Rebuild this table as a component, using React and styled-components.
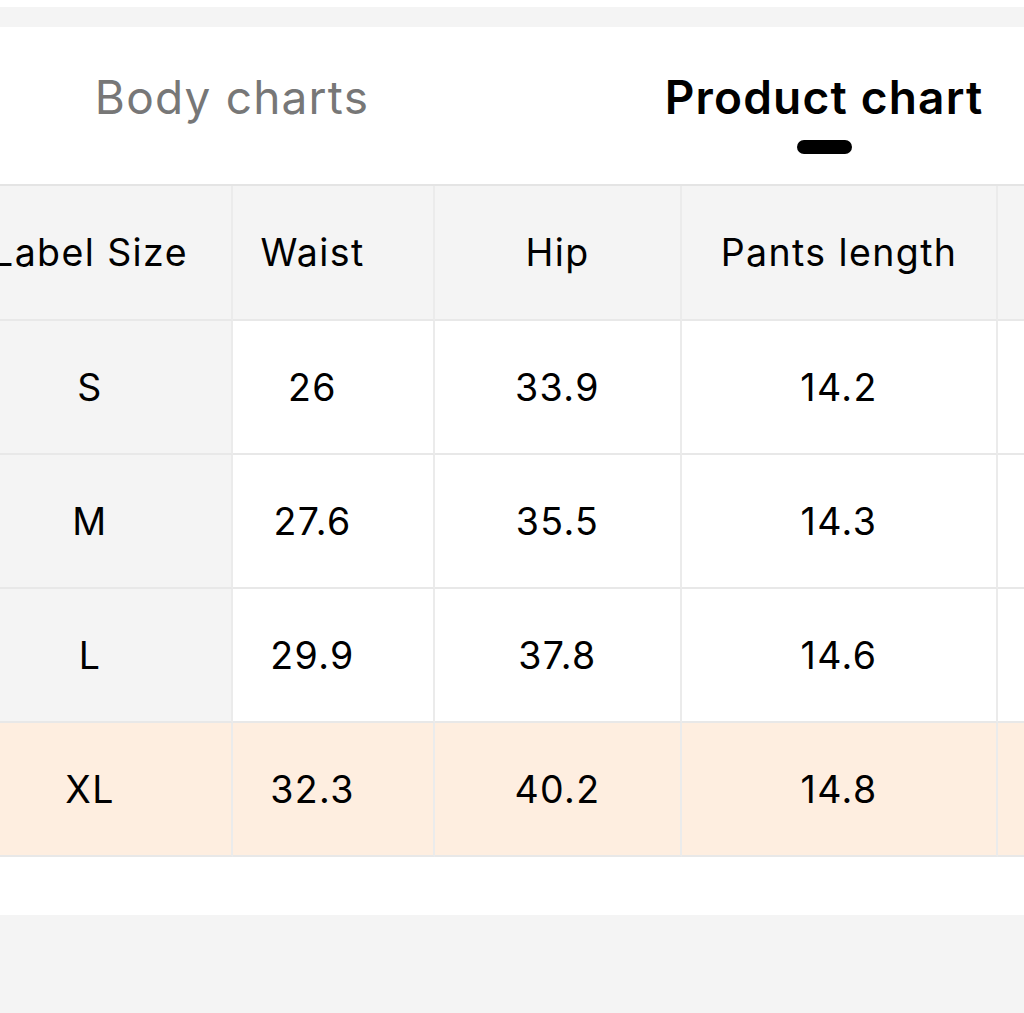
import React from "react";
import styled, { createGlobalStyle } from "styled-components";

const Global = createGlobalStyle`
  html, body { margin: 0; padding: 0; background: #ffffff; overflow: hidden; }
  body { font-family: Inter, "Noto Sans", "Liberation Sans", sans-serif; color: #000; }
  * { box-sizing: border-box; }
`;

const Page = styled.div`
  width: 1024px;
  height: 1013px;
  display: flex;
  flex-direction: column;
  overflow: hidden;
  background: #ffffff;
`;

const TopSpace = styled.div`
  height: 7px;
  background: #ffffff;
  flex: none;
`;

const GrayBand = styled.div`
  height: ${(p) => p.$h}px;
  background: #f4f4f4;
  flex: ${(p) => (p.$grow ? "1 1 auto" : "none")};
`;

const Sheet = styled.section`
  background: #ffffff;
  flex: none;
  padding-bottom: 58px;
`;

const TabBar = styled.div`
  display: grid;
  grid-template-columns: 464px 720px;
  padding: 42px 0 30px;
  width: 1184px;
`;

const Tab = styled.div`
  display: flex;
  flex-direction: column;
  align-items: center;
`;

const TabLabel = styled.span`
  font-size: 46px;
  line-height: 56px;
  font-weight: ${(p) => (p.$active ? 600 : 400)};
  color: ${(p) => (p.$active ? "#000000" : "#777777")};
  white-space: nowrap;
  letter-spacing: 1.2px;
`;

const Indicator = styled.span`
  margin-top: 15px;
  width: 55px;
  height: 14px;
  border-radius: 7px;
  background: #000000;
  visibility: ${(p) => (p.$active ? "visible" : "hidden")};
`;

const TableViewport = styled.div`
  overflow: hidden;
  border-top: 2px solid #e4e4e4;
`;

const Table = styled.div`
  display: grid;
  grid-template-columns: ${(p) => p.$cols};
  grid-template-rows: 135px repeat(4, 134px);
  margin-left: -51px;
  width: max-content;
`;

const Cell = styled.div`
  display: flex;
  align-items: center;
  justify-content: center;
  padding-right: ${(p) => p.$pr || 0}px;
  border-right: 2px solid #ebebeb;
  border-bottom: 2px solid #e8e8e8;
  background: ${(p) => p.$bg};
  font-size: 37.5px;
  letter-spacing: 1.4px;
  font-weight: 400;
  color: #000000;
  white-space: nowrap;
`;

const columns = [
  { key: "size", title: "Label Size", width: 284, pr: 0 },
  { key: "waist", title: "Waist", width: 202, pr: 41 },
  { key: "hip", title: "Hip", width: 247, pr: 0 },
  { key: "length", title: "Pants length", width: 316, pr: 0 },
  { key: "extra", title: "", width: 300, pr: 0 },
];

const rows = [
  { size: "S", waist: "26", hip: "33.9", length: "14.2", extra: "" },
  { size: "M", waist: "27.6", hip: "35.5", length: "14.3", extra: "" },
  { size: "L", waist: "29.9", hip: "37.8", length: "14.6", extra: "" },
  { size: "XL", waist: "32.3", hip: "40.2", length: "14.8", extra: "", highlight: true },
];

const GRAY = "#f4f4f4";
const PEACH = "#feeee0";

export default function App() {
  const cols = columns.map((c) => `${c.width}px`).join(" ");
  return (
    <>
      <Global />
      <Page>
        <TopSpace />
        <GrayBand $h={20} />
        <Sheet>
          <TabBar>
            <Tab>
              <TabLabel>Body charts</TabLabel>
              <Indicator />
            </Tab>
            <Tab>
              <TabLabel $active>Product chart</TabLabel>
              <Indicator $active />
            </Tab>
          </TabBar>
          <TableViewport>
            <Table $cols={cols}>
              {columns.map((c) => (
                <Cell key={`h-${c.key}`} $bg={GRAY} $pr={c.pr}>
                  {c.title}
                </Cell>
              ))}
              {rows.map((r) =>
                columns.map((c, i) => (
                  <Cell
                    key={`${r.size}-${c.key}`}
                    $pr={c.pr}
                    $bg={r.highlight ? PEACH : i === 0 ? GRAY : "#ffffff"}
                  >
                    {r[c.key]}
                  </Cell>
                ))
              )}
            </Table>
          </TableViewport>
        </Sheet>
        <GrayBand $grow />
      </Page>
    </>
  );
}
